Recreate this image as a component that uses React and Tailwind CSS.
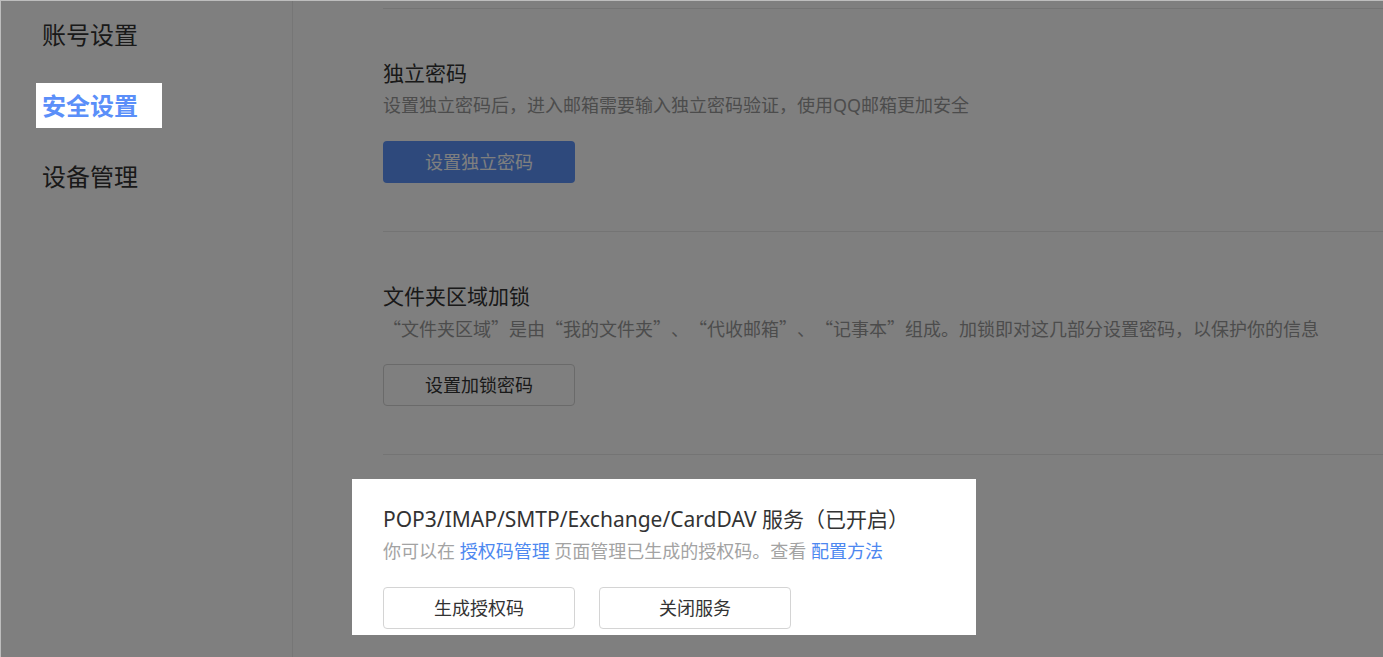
import { useState } from 'react'

const navItems = ['账号设置', '安全设置', '设备管理']

function Section({ title, desc, cjk, children }) {
  return (
    <section className="border-t border-[#e8e8e8] pb-[48px] pt-[49px]">
      <div className="text-[21px] leading-[30px] text-[#333]">{title}</div>
      <div
        className="mt-[3px] text-[18px] leading-[28px] text-[#999] [text-spacing-trim:space-all]"
        style={cjk ? { fontFamily: '"Noto Sans CJK SC", sans-serif' } : undefined}
      >
        {desc}
      </div>
      <div className="mt-[22px] flex gap-6">{children}</div>
    </section>
  )
}

function Btn({ primary, children }) {
  return (
    <button
      className={
        primary
          ? 'h-[42px] w-[192px] rounded-[4px] bg-[#5c93f9] text-[18px] text-white'
          : 'h-[42px] w-[192px] rounded-[4px] border border-[#d4d4d4] bg-white text-[18px] text-[#333]'
      }
    >
      {children}
    </button>
  )
}

export default function App() {
  const [active] = useState(1)

  return (
    <div
      className="flex h-[657px] overflow-hidden bg-white"
      style={{ fontFamily: '"Noto Sans", "Noto Sans CJK SC", sans-serif' }}
    >
      <aside className="w-[293px] shrink-0 border-r border-[#ececec] pl-[36px] pt-[12px]">
        <div className="flex flex-col gap-[26px]">
          {navItems.map((item, i) => (
            <div
              key={item}
              className={
                i === active
                  ? 'relative z-20 flex h-[45px] w-[126px] items-center bg-white pl-[6px] text-[24px] font-bold text-[#5b8ff9]'
                  : 'flex h-[45px] items-center pl-[6px] text-[24px] text-[#333]'
              }
            >
              {item}
            </div>
          ))}
        </div>
      </aside>

      <main className="flex-1 pl-[90px] pt-[8px]">
        <Section title="独立密码" desc="设置独立密码后，进入邮箱需要输入独立密码验证，使用QQ邮箱更加安全">
          <Btn primary>设置独立密码</Btn>
        </Section>

        <Section
          cjk
          title="文件夹区域加锁"
          desc="“文件夹区域”是由“我的文件夹”、“代收邮箱”、“记事本”组成。加锁即对这几部分设置密码，以保护你的信息"
        >
          <Btn>设置加锁密码</Btn>
        </Section>

        <section className="border-t border-[#e8e8e8] pt-[24px]">
          <div className="relative z-20 -ml-[31px] w-[624px] bg-white px-[31px] pb-[6px] pt-[25px]">
            <div className="text-[21px] leading-[30px] text-[#333] [text-spacing-trim:space-all]">
              POP3/IMAP/SMTP/Exchange/CardDAV 服务（已开启）
            </div>
            <div className="mt-[3px] text-[18px] leading-[28px] text-[#a3a3a3]">
              你可以在 <a className="cursor-pointer text-[#4d88f0]">授权码管理</a> 页面管理已生成的授权码。查看{' '}
              <a className="cursor-pointer text-[#4d88f0]">配置方法</a>
            </div>
            <div className="mt-[22px] flex gap-6">
              <Btn>生成授权码</Btn>
              <Btn>关闭服务</Btn>
            </div>
          </div>
        </section>
      </main>

      {/* guide mask */}
      <div className="fixed inset-0 z-10 bg-black/50" />
      <div className="pointer-events-none fixed inset-0 z-30 border-l border-t border-[#bdbdbd]" />
    </div>
  )
}
